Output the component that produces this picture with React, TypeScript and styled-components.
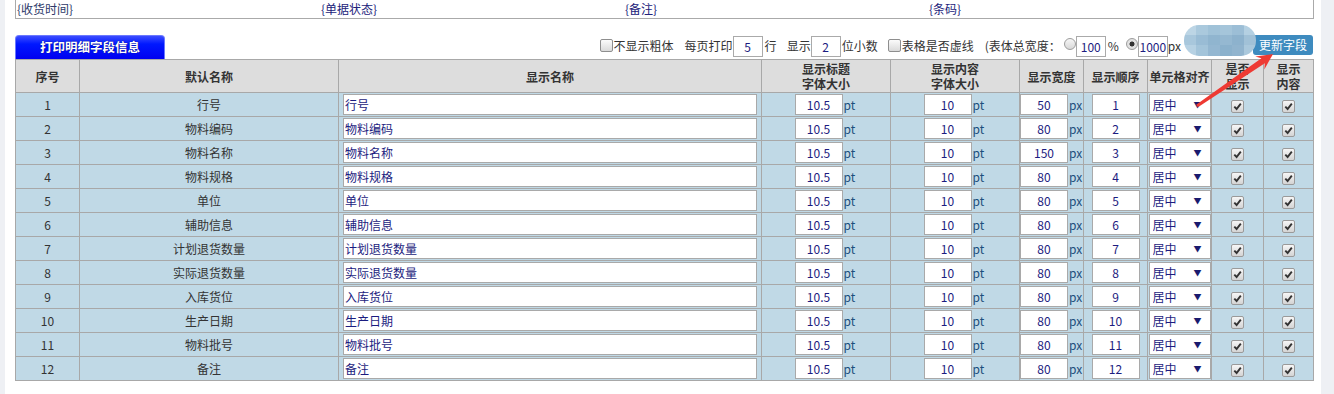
import React from 'react'
import styled, { createGlobalStyle } from 'styled-components'

const GlobalStyle = createGlobalStyle`
  html, body {
    margin: 0;
    padding: 0;
    background: #eef0f4;
  }
  body {
    font-family: "Noto Sans CJK SC", "Microsoft YaHei", sans-serif;
    font-size: 12px;
    color: #333;
  }
`

const rows: [string, number][] = [
  ['行号', 50],
  ['物料编码', 80],
  ['物料名称', 150],
  ['物料规格', 80],
  ['单位', 80],
  ['辅助信息', 80],
  ['计划退货数量', 80],
  ['实际退货数量', 80],
  ['入库货位', 80],
  ['生产日期', 80],
  ['物料批号', 80],
  ['备注', 80],
]

const colWidths = [64, 259, 423, 129, 129, 64, 64, 64, 52, 50]

const mosaic = [
  '#bcd5e5', '#aac9dd', '#a0c2d8', '#a5c5da', '#9cbed6', '#b4d0e2',
  '#a8c7dc', '#99bcd5', '#90b5cf', '#95b8d1', '#8db2cd', '#a1c1d7',
  '#b6d1e3', '#a3c4da', '#94b7d1', '#8bb1cc', '#91b4ce', '#aac8dc',
]

export default function App() {
  return (
    <>
      <GlobalStyle />
      <Page>
        <InfoBox>
          <InfoCell>{'{收货时间}'}</InfoCell>
          <InfoCell $navy>{'{单据状态}'}</InfoCell>
          <InfoCell $navy>{'{备注}'}</InfoCell>
          <InfoCell $navy>{'{条码}'}</InfoCell>
        </InfoBox>

        <Toolbar>
          <Tab>打印明细字段信息</Tab>
          <Controls>
            <Box />
            <Label>不显示粗体</Label>
            <Label $gap={11}>每页打印</Label>
            <SmallInput readOnly value="5" />
            <Label $gap={2}>行</Label>
            <Label $gap={10}>显示</Label>
            <SmallInput readOnly value="2" />
            <Label $gap={1}>位小数</Label>
            <Box $gap={10} />
            <Label>表格是否虚线</Label>
            <Label $gap={11}>(表体总宽度：</Label>
            <Radio $gap={3} />
            <SmallInput readOnly value="100" />
            <Label $gap={2}>%</Label>
            <Radio $gap={7} $checked />
            <SmallInput readOnly value="1000" />
            <Label>px</Label>
            <Blur>
              {mosaic.map((c, i) => (
                <Tile key={i} style={{ background: c }} />
              ))}
            </Blur>
            <UpdateButton>更新字段</UpdateButton>
          </Controls>
        </Toolbar>

        <FieldTable>
          <colgroup>
            {colWidths.map((w, i) => (
              <col key={i} style={{ width: w }} />
            ))}
          </colgroup>
          <thead>
            <tr>
              <Th>序号</Th>
              <Th>默认名称</Th>
              <Th>显示名称</Th>
              <Th>显示标题<br />字体大小</Th>
              <Th>显示内容<br />字体大小</Th>
              <Th>显示宽度</Th>
              <Th>显示顺序</Th>
              <Th>单元格对齐</Th>
              <Th>是否<br />显示</Th>
              <Th>显示<br />内容</Th>
            </tr>
          </thead>
          <tbody>
            {rows.map(([name, width], i) => (
              <tr key={name}>
                <Td>{i + 1}</Td>
                <Td>{name}</Td>
                <Td $left>
                  <NameInput readOnly value={name} />
                </Td>
                <Td>
                  <NumInput readOnly value="10.5" />
                  <Unit>pt</Unit>
                </Td>
                <Td>
                  <NumInput readOnly value="10" />
                  <Unit>pt</Unit>
                </Td>
                <Td>
                  <NumInput readOnly value={String(width)} />
                  <Unit>px</Unit>
                </Td>
                <Td>
                  <NumInput readOnly value={String(i + 1)} />
                </Td>
                <Td>
                  <SelectWrap>
                    <AlignSelect defaultValue="center">
                      <option value="left">居左</option>
                      <option value="center">居中</option>
                      <option value="right">居右</option>
                    </AlignSelect>
                    <Caret>▼</Caret>
                  </SelectWrap>
                </Td>
                <Td>
                  <Checked />
                </Td>
                <Td>
                  <Checked />
                </Td>
              </tr>
            ))}
          </tbody>
        </FieldTable>

        {/* red annotation arrow pointing at the update button */}
        <Arrow width="100" height="70" viewBox="0 0 100 70">
          <polygon
            points="16.15,59.76 81.4,13.3 75.3,11.4 93,9 84.3,24.6 84.8,18.3 17.85,62.24"
            fill="#ee3a33"
          />
        </Arrow>
      </Page>
    </>
  )
}

function Checked() {
  return (
    <CheckBox>
      <svg width="9" height="9" viewBox="0 0 9 9">
        <path d="M1.3 4.6 L3.6 7 L7.8 1.6" fill="none" stroke="#333" strokeWidth="1.9" />
      </svg>
    </CheckBox>
  )
}

const Page = styled.div`
  position: relative;
  box-sizing: border-box;
  margin-left: 5px;
  width: 1316px;
  min-height: 394px;
  background: #fff;
  padding-left: 10px;
`

const InfoBox = styled.div`
  box-sizing: border-box;
  width: 1299px;
  height: 19px;
  border: 1px solid #aaa;
  border-top: none;
  display: grid;
  grid-template-columns: repeat(4, 304px) 1fr;
  padding-left: 1px;
`

const InfoCell = styled.div<{ $navy?: boolean }>`
  line-height: 17px;
  color: ${(p) => (p.$navy ? '#22227a' : '#2e3a6a')};
`

const Toolbar = styled.div`
  display: flex;
  justify-content: space-between;
  align-items: flex-start;
  width: 1299px;
  height: 24px;
  margin-top: 16px;
`

const Tab = styled.div`
  box-sizing: border-box;
  width: 150px;
  height: 24px;
  border: 1px solid #6a78ff;
  border-bottom: none;
  border-radius: 4px 4px 0 0;
  background: linear-gradient(#3c4dff, #0018ff 35%, #0000f0);
  color: #fff;
  font-weight: bold;
  font-size: 12.5px;
  line-height: 22px;
  text-align: center;
  text-shadow: 0 0 1px #000a;
`

const Controls = styled.div`
  display: flex;
  align-items: center;
  height: 22px;
  margin-right: 1px;
`

const Label = styled.span<{ $gap?: number }>`
  margin-left: ${(p) => p.$gap ?? 0}px;
  line-height: 22px;
  color: #333;
  white-space: nowrap;
`

const Box = styled.span<{ $gap?: number }>`
  box-sizing: border-box;
  width: 13px;
  height: 13px;
  margin-left: ${(p) => p.$gap ?? 0}px;
  margin-right: 1px;
  margin-top: -2px;
  border: 1px solid #8e8e8e;
  border-radius: 2px;
  background: linear-gradient(#fbfbfb, #dadada);
`

const Radio = styled.span<{ $gap?: number; $checked?: boolean }>`
  box-sizing: border-box;
  width: 12px;
  height: 12px;
  margin: -4px 0 0 ${(p) => p.$gap ?? 0}px;
  border: 1px solid #9c9c9c;
  border-radius: 50%;
  background: ${(p) =>
    p.$checked
      ? 'radial-gradient(circle, #333 0 2.2px, #e2e2e2 2.8px)'
      : 'linear-gradient(#f6f6f6, #d8d8d8)'};
`

const SmallInput = styled.input`
  box-sizing: border-box;
  width: 30px;
  height: 21px;
  margin: 0;
  padding: 0;
  border: 1px solid #aaa;
  font: 12px "Noto Sans CJK SC", sans-serif;
  color: #1c1c80;
  text-align: center;
  outline: none;
`

const Blur = styled.div`
  display: grid;
  grid-template-columns: repeat(6, 12px);
  grid-auto-rows: 10.4px;
  width: 72px;
  height: 31px;
  margin: -12px -3px 0 3px;
  border-radius: 15px;
  overflow: hidden;
  position: relative;
  z-index: 1;
  filter: blur(0.4px);
`

const Tile = styled.span``

const UpdateButton = styled.button`
  box-sizing: border-box;
  width: 60px;
  height: 20px;
  margin: -2px 0 0 0;
  padding: 0;
  border: none;
  border-radius: 3px;
  background: #3e8bbf;
  color: #fff;
  font: 12px "Noto Sans CJK SC", sans-serif;
  line-height: 20px;
`

const FieldTable = styled.table`
  table-layout: fixed;
  width: 1299px;
  border-collapse: collapse;
  border: 1px solid #a8a8a8;
`

const Th = styled.th`
  height: 32px;
  padding: 0;
  border: 1px solid #a8a8a8;
  background: #dddddd;
  font-weight: bold;
  font-size: 12px;
  line-height: 15px;
  color: #333;
  text-align: center;
`

const Td = styled.td<{ $left?: boolean }>`
  height: 23px;
  padding: 0 0 0 ${(p) => (p.$left ? 4 : 0)}px;
  border: 1px solid #a8a8a8;
  background: #c0d9e6;
  text-align: ${(p) => (p.$left ? 'left' : 'center')};
  white-space: nowrap;
  line-height: 16px;
  color: #333;
`

const inputBase = `
  box-sizing: border-box;
  height: 21px;
  margin: 0;
  border: 1px solid #a9a9a9;
  background: #fff;
  font: 12px "Noto Sans CJK SC", sans-serif;
  color: #1c1c80;
  outline: none;
  vertical-align: middle;
`

const NameInput = styled.input`
  ${inputBase}
  width: 414px;
  padding: 0 0 0 1px;
`

const NumInput = styled.input`
  ${inputBase}
  width: 48px;
  padding: 0;
  text-align: center;
`

const Unit = styled.span`
  display: inline-block;
  width: 14px;
  margin-left: 1px;
  text-align: left;
  vertical-align: middle;
  color: #1d4f7c;
`

const SelectWrap = styled.span`
  position: relative;
  display: inline-block;
  vertical-align: middle;
`

const AlignSelect = styled.select`
  ${inputBase}
  appearance: none;
  width: 62px;
  padding: 0 0 0 3px;
  border-radius: 0;
  display: block;
`

const Caret = styled.span`
  position: absolute;
  right: 9px;
  top: 6px;
  font-size: 8px;
  line-height: 9px;
  color: #1a1a6e;
  pointer-events: none;
`

const CheckBox = styled.span`
  box-sizing: border-box;
  display: inline-flex;
  align-items: center;
  justify-content: center;
  width: 13px;
  height: 13px;
  vertical-align: middle;
  border: 1px solid #9a9a9a;
  border-radius: 2px;
  background: linear-gradient(#f6f6f6, #d4d4d4);
`

const Arrow = styled.svg`
  position: absolute;
  left: 1175px;
  top: 45px;
  z-index: 2;
  pointer-events: none;
`
